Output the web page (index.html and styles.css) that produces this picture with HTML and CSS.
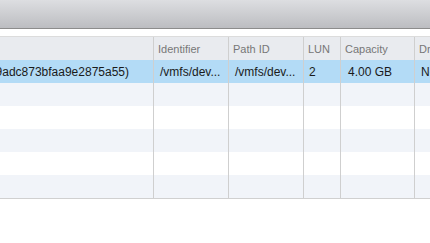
FILE: index.html
```html
<!DOCTYPE html>
<html lang="en">
<head>
  <meta charset="UTF-8" />
  <title>Devices</title>
  <link rel="stylesheet" href="styles.css">
</head>
<body>
  <div class="toolbar"></div>

  <div class="grid">
    <div class="row head">
      <div class="cell c-name"></div>
      <div class="cell c-id">Identifier</div>
      <div class="cell c-path">Path ID</div>
      <div class="cell c-lun">LUN</div>
      <div class="cell c-cap">Capacity</div>
      <div class="cell c-drive">Drive Type</div>
    </div>
    <div class="row selected">
      <div class="cell c-name"><span>Local VMware Disk (mpx.vmhba1:C0:T2:L0 naa.6000c29adc873bfaa9e2875a55)</span></div>
      <div class="cell c-id">/vmfs/dev...</div>
      <div class="cell c-path">/vmfs/dev...</div>
      <div class="cell c-lun">2</div>
      <div class="cell c-cap">4.00 GB</div>
      <div class="cell c-drive">Non-SSD</div>
    </div>
    <div class="row alt"><div class="cell c-name"></div><div class="cell c-id"></div><div class="cell c-path"></div><div class="cell c-lun"></div><div class="cell c-cap"></div><div class="cell c-drive"></div></div>
    <div class="row"><div class="cell c-name"></div><div class="cell c-id"></div><div class="cell c-path"></div><div class="cell c-lun"></div><div class="cell c-cap"></div><div class="cell c-drive"></div></div>
    <div class="row alt"><div class="cell c-name"></div><div class="cell c-id"></div><div class="cell c-path"></div><div class="cell c-lun"></div><div class="cell c-cap"></div><div class="cell c-drive"></div></div>
    <div class="row"><div class="cell c-name"></div><div class="cell c-id"></div><div class="cell c-path"></div><div class="cell c-lun"></div><div class="cell c-cap"></div><div class="cell c-drive"></div></div>
    <div class="row alt"><div class="cell c-name"></div><div class="cell c-id"></div><div class="cell c-path"></div><div class="cell c-lun"></div><div class="cell c-cap"></div><div class="cell c-drive"></div></div>
  </div>
</body>
</html>
```

FILE: styles.css
```css
body {
  margin: 0;
  width: 430px;
  overflow: hidden;
  background-color: #fff;
  font-family: 'Liberation Sans', Arial, sans-serif;
  color: #222;
}

.toolbar {
  height: 28px;
  background: linear-gradient(#dddee1, #bcbdc1);
  border-bottom: 1px solid #8c8c8c;
}

.grid {
  margin-top: 7px;
  border-top: 1px solid #dcdcdc;
  border-bottom: 1px solid #d0d0d0;
  width: 480px;
}

.row {
  display: flex;
  height: 23px;
  background-color: #fff;
}

.row.alt {
  background-color: #f1f4f9;
}

.row.head {
  background-color: #e9ebef;
  color: #777;
  font-size: 11px;
}

.row.selected {
  background-color: #b3dbf6;
  font-size: 12px;
  color: #1a1a1a;
}

.cell {
  flex: none;
  box-sizing: border-box;
  display: flex;
  align-items: center;
  white-space: nowrap;
  overflow: hidden;
  border-right: 1px solid #cfcfcf;
  padding-left: 6px;
}

.head .cell {
  padding-left: 4px;
}

.c-name {
  width: 154px;
  justify-content: flex-end;
  padding-right: 24px;
}

.head .c-name {
  padding-right: 0;
}

.c-id { width: 75px; }
.c-path { width: 75px; }
.c-lun { width: 37px; padding-left: 5px; }
.c-cap { width: 74px; padding-left: 7px; }
.c-drive { width: 60px; border-right: none; padding-left: 6px; }
```
